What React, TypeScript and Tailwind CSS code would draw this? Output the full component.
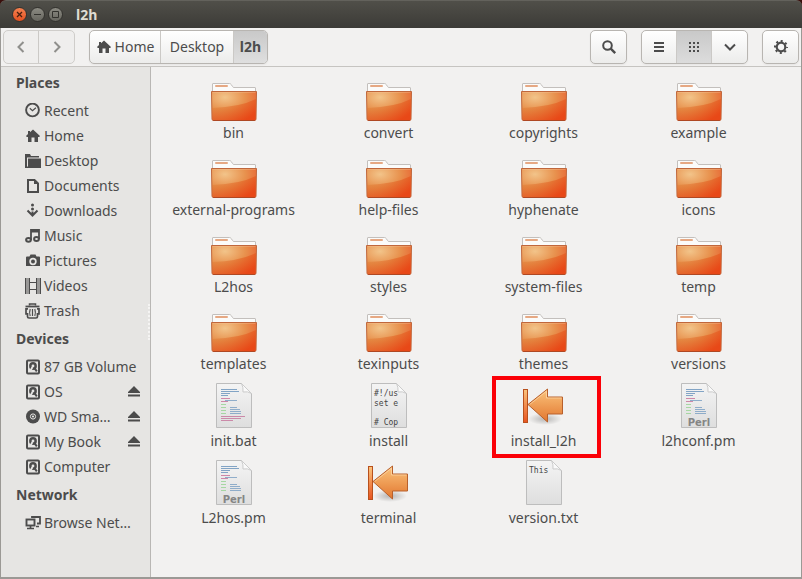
import React from 'react';
import clsx from 'clsx';

type FileKind = 'folder' | 'script' | 'shell' | 'perl' | 'text' | 'launcher';

interface FileEntry {
    name: string;
    kind: FileKind;
    marked?: boolean;
}

interface Place {
    name: string;
    icon: React.FC;
    ejectable?: boolean;
}

const FOLDERS = [
    'bin', 'convert', 'copyrights', 'example',
    'external-programs', 'help-files', 'hyphenate', 'icons',
    'L2hos', 'styles', 'system-files', 'temp',
    'templates', 'texinputs', 'themes', 'versions',
];

const FILES: FileEntry[] = [
    ...FOLDERS.map((name): FileEntry => ({ name, kind: 'folder' })),
    { name: 'init.bat', kind: 'script' },
    { name: 'install', kind: 'shell' },
    { name: 'install_l2h', kind: 'launcher', marked: true },
    { name: 'l2hconf.pm', kind: 'perl' },
    { name: 'L2hos.pm', kind: 'perl' },
    { name: 'terminal', kind: 'launcher' },
    { name: 'version.txt', kind: 'text' },
];

// Small symbolic icons, all on a 16px grid
const Symbolic: React.FC<{ children: React.ReactNode }> = ({ children }) => (
    <svg width="16" height="16" viewBox="0 0 16 16" className="shrink-0" fill="none" stroke="currentColor" strokeWidth="2" aria-hidden="true">
        {children}
    </svg>
);

const RecentIcon = () => (
    <Symbolic>
        <circle cx="7.5" cy="7" r="6.4" strokeWidth="1.9" />
        <path d="M4.8 5.3 7.5 7.7l3.4-3" strokeWidth="1.2" />
    </Symbolic>
);

const HomeIcon = () => (
    <Symbolic>
        <path d="M8 1.5 15 8l-.8.9H13V14H9.5V9.5h-3V14H3V8.9H1.8L1 8l2-1.9V3h2v1.3z" fill="currentColor" stroke="none" />
    </Symbolic>
);

const DesktopIcon = () => (
    <Symbolic>
        <path d="M0 15V1h5l1 2h8v1.500H2V15z" fill="currentColor" stroke="none" />
        <path d="M3 5.500h13V15H1.200L3 13z" fill="currentColor" stroke="none" />
    </Symbolic>
);

const DocumentIcon = () => (
    <Symbolic>
        <path d="M3 2h6.5L13 5.5V14H3z" />
        <path d="M9 1v5h5z" fill="currentColor" stroke="none" />
    </Symbolic>
);

const DownloadIcon = () => (
    <Symbolic>
        <circle cx="7.5" cy="2" r="1.5" fill="currentColor" stroke="none" />
        <circle cx="7.5" cy="6" r="1.5" fill="currentColor" stroke="none" />
        <path d="M7.5 8.500V12M2.500 7.500l5 5 5-5" strokeWidth="2" />
    </Symbolic>
);

const MusicIcon = () => (
    <Symbolic>
        <path d="M6 12V2h8v9M6 3.500h8" strokeWidth="1.8" />
        <ellipse cx="3.5" cy="11.800" rx="2.400" ry="1.900" strokeWidth="2" />
        <ellipse cx="11.5" cy="11" rx="2.400" ry="1.900" strokeWidth="2" />
    </Symbolic>
);

const CameraIcon = () => (
    <Symbolic>
        <path fillRule="evenodd" d="M5.5 1.5h5l1 2H14q1 0 1 1V13H1V4.5q0-1 1-1h2.500zM8 4.800a3.700 3.700 0 1 0 0 7.400 3.700 3.700 0 0 0 0-7.400z" fill="currentColor" stroke="none" />
        <circle cx="8" cy="8.500" r="2" fill="currentColor" stroke="none" />
    </Symbolic>
);

const FilmIcon = () => (
    <Symbolic>
        <path d="M.5 0v16M4.500 0v16M11.500 0v16M15.500 0v16" strokeWidth="1" />
        <path d="M2.500 .5v15M13.500 .5v15" strokeWidth="3" strokeDasharray="1 1" />
        <path d="M4.500 4.500h7M4.500 11.500h7" strokeWidth="1" />
    </Symbolic>
);

const TrashIcon = () => (
    <Symbolic>
        <path d="M4.500 2.500V1h6v1.500" strokeWidth="1.500" />
        <path d="M.5 3.500h14" strokeWidth="1.800" />
        <path d="M3 5.800H1v5h1.500v2.700q0 1.500 1.500 1.500h7q1.500 0 1.500-1.500v-2.700H14v-5H12" strokeWidth="1.700" />
        <path d="M5.200 6q-1.200 3.500 0 7M9.800 6q1.200 3.500 0 7M7.500 6v7" strokeWidth="1.200" />
    </Symbolic>
);

const DriveIcon = () => (
    <Symbolic>
        <rect x="2" y="1.500" width="12" height="13" rx="1" />
        <circle cx="8" cy="7" r="3.900" fill="currentColor" stroke="none" />
        <circle cx="8" cy="7" r="1.400" fill="#e6e5e3" stroke="none" />
        <path d="M7.500 8 5 12.500" stroke="#e6e5e3" strokeWidth="1.800" />
        <path d="m9 8.500 2.800 3.800" strokeWidth="2" />
    </Symbolic>
);

const DiscIcon = () => (
    <Symbolic>
        <circle cx="8" cy="7.500" r="7" fill="currentColor" stroke="none" />
        <circle cx="8" cy="7.500" r="2.600" stroke="#e6e5e3" strokeWidth="1" />
        <circle cx="8" cy="7.500" r="1.100" fill="#e6e5e3" stroke="none" />
    </Symbolic>
);

const NetworkIcon = () => (
    <Symbolic>
        <path d="M7 3V2h8v6.5h-3" strokeWidth="1.8" />
        <rect x="1.500" y="4.500" width="8" height="6" strokeWidth="1.900" />
        <path d="M2 13.500h7M11 11.500h3M5.500 11v2" strokeWidth="1.700" />
    </Symbolic>
);

const EjectIcon = () => (
    <svg width="14" height="14" viewBox="0 0 14 14" fill="currentColor" aria-hidden="true">
        <path d="M7 1 13 7v1H1V7zM1 9.500h12v2H1z" />
    </svg>
);

const SECTIONS: { title: string; places: Place[] }[] = [
    {
        title: 'Places',
        places: [
            { name: 'Recent', icon: RecentIcon },
            { name: 'Home', icon: HomeIcon },
            { name: 'Desktop', icon: DesktopIcon },
            { name: 'Documents', icon: DocumentIcon },
            { name: 'Downloads', icon: DownloadIcon },
            { name: 'Music', icon: MusicIcon },
            { name: 'Pictures', icon: CameraIcon },
            { name: 'Videos', icon: FilmIcon },
            { name: 'Trash', icon: TrashIcon },
        ],
    },
    {
        title: 'Devices',
        places: [
            { name: '87 GB Volume', icon: DriveIcon },
            { name: 'OS', icon: DriveIcon, ejectable: true },
            { name: 'WD Sma…', icon: DiscIcon, ejectable: true },
            { name: 'My Book', icon: DriveIcon, ejectable: true },
            { name: 'Computer', icon: DriveIcon },
        ],
    },
    {
        title: 'Network',
        places: [{ name: 'Browse Net…', icon: NetworkIcon }],
    },
];

// Gradients are shared by every file icon, so they are defined once
const IconGradients = () => (
    <svg width="0" height="0" className="absolute" aria-hidden="true">
        <defs>
            <radialGradient id="folderFront" cx="0.3" cy="0.2" r="0.9">
                <stop offset="0" stopColor="#f2c48a" />
                <stop offset="0.5" stopColor="#e8924e" />
                <stop offset="1" stopColor="#e8562a" />
            </radialGradient>
            <linearGradient id="folderShade" x1="0" y1="0" x2="1" y2="0.6">
                <stop offset="0" stopColor="#dc8a3c" stopOpacity="0.35" />
                <stop offset="1" stopColor="#e8420f" stopOpacity="0.7" />
            </linearGradient>
            <linearGradient id="sheet" x1="0" y1="0" x2="0" y2="1">
                <stop offset="0" stopColor="#f4f4f4" />
                <stop offset="1" stopColor="#dedede" />
            </linearGradient>
            <linearGradient id="arrow" x1="0" y1="0" x2="0" y2="1">
                <stop offset="0" stopColor="#fbc47c" />
                <stop offset="1" stopColor="#e2762f" />
            </linearGradient>
            <linearGradient id="bar" x1="0" y1="0" x2="0" y2="1">
                <stop offset="0" stopColor="#fbc47c" />
                <stop offset="1" stopColor="#e8531f" />
            </linearGradient>
            <radialGradient id="arrowShadow">
                <stop offset="0" stopColor="#000" stopOpacity="0.25" />
                <stop offset="1" stopColor="#000" stopOpacity="0" />
            </radialGradient>
        </defs>
    </svg>
);

const FolderArt = () => (
    <>
        <path d="M2.500 18V10q0-.5.5-.5h16.500q1 0 1.700 1l1.300 2q.5 1 1.500 1H45q.5 0 .5.500V18z" fill="#fbfbfa" stroke="#c3bfbc" />
        <rect x="5" y="11" width="13" height="2" rx="1" fill="#e6a883" />
        <path d="M1.500 17.500h45L46 45q0 1.500-1.500 1.500h-41Q2 46.500 2 45z" fill="url(#folderFront)" stroke="#c0673c" />
        <path d="M2.200 34Q30 33 45.900 25L45.500 46h-43z" fill="url(#folderShade)" />
        <path d="M2.500 18.500h43" stroke="#f6c79a" strokeOpacity="0.35" />
        <path d="M3 46.500h42" stroke="#a83c18" strokeOpacity="0.7" />
    </>
);

const LauncherArt = () => (
    <>
        <ellipse cx="25" cy="37" rx="17" ry="6" fill="url(#arrowShadow)" />
        <rect x="3.500" y="7.500" width="4" height="33" fill="url(#bar)" stroke="#b8501c" />
        <path d="M8 22.500 27.500 7v8h15v17h-15v8z" fill="url(#arrow)" stroke="#b8602c" strokeLinejoin="round" />
        <path d="M9.700 22.500 26.500 9.200V16h15" stroke="#fde0b4" strokeOpacity="0.6" fill="none" />
    </>
);

const CodeLines = () => (
    <g strokeOpacity="0.85">
        <path d="M11 7.500h16M11 9.500h18M11 11.500h9M11 13.500h7" stroke="#6f96bd" />
        <path d="M11 16.500h9M11 19.500h7" stroke="#c9759c" />
        <path d="M15 18.500h12M20 25.500h7M20 27.500h10M20 29.500h11M20 31.500h11" stroke="#7fa2c4" />
        <path d="M11 22.500h5M11 25.500h5M11 28.500h5M11 31.500h5" stroke="#9bd497" />
    </g>
);

const SheetArt: React.FC<{ kind: FileKind }> = ({ kind }) => (
    <>
        <path d="M6.500 1.500h25l10 10v34h-35z" fill="url(#sheet)" stroke="#bdbdbd" />
        {kind === 'script' && (
            <>
                <CodeLines />
                <path d="M11 34.500h24M11 36.500h20M11 38.500h12" stroke="#cb8aa9" />
            </>
        )}
        {kind === 'perl' && (
            <>
                <CodeLines />
                <text x="24" y="44" textAnchor="middle" className="fill-[#858585] font-['DejaVu_Sans'] text-[10px] font-bold">Perl</text>
            </>
        )}
        {kind === 'shell' && (
            <g className="fill-[#444] font-['DejaVu_Sans_Mono'] text-[8px]">
                <text x="9" y="14">#!/us</text>
                <text x="9" y="24">set e</text>
                <text x="9" y="43"># Cop</text>
            </g>
        )}
        {kind === 'text' && (
            <text x="9" y="14" className="fill-[#444] font-['DejaVu_Sans_Mono'] text-[8px]">This</text>
        )}
        <path d="M31.500 1.500l10 10q-4-2.500-8.500-1.500 .5-4.500-1.500-8.500z" fill="#fafafa" stroke="#cbcbcb" strokeLinejoin="round" />
    </>
);

const FileIcon: React.FC<{ kind: FileKind }> = ({ kind }) => (
    <svg width="48" height="48" viewBox="0 0 48 48" aria-hidden="true">
        {kind === 'folder' && <FolderArt />}
        {kind === 'launcher' && <LauncherArt />}
        {kind !== 'folder' && kind !== 'launcher' && <SheetArt kind={kind} />}
    </svg>
);

const TitleBar = () => (
    <header className="flex h-7 items-center gap-[3px] rounded-t-md border-t border-[#63625c] bg-linear-to-b from-[#504f49] to-[#3c3b37] pl-3">
        <button aria-label="Close" className="flex size-[15px] items-center justify-center rounded-full border border-[#33322e] bg-linear-to-b from-[#f4804f] to-[#e4501f] text-[#4a2010]">
            <svg width="7" height="7" viewBox="0 0 7 7" stroke="currentColor" strokeWidth="1.3"><path d="m1 1 5 5M6 1 1 6" /></svg>
        </button>
        <button aria-label="Minimize" className="flex size-[15px] items-center justify-center rounded-full border border-[#33322e] bg-linear-to-b from-[#8b8a82] to-[#67665f] text-[#33322e]">
            <svg width="7" height="7" viewBox="0 0 7 7" stroke="currentColor"><path d="M0 3.5h7" /></svg>
        </button>
        <button aria-label="Maximize" className="flex size-[15px] items-center justify-center rounded-full border border-[#33322e] bg-linear-to-b from-[#8b8a82] to-[#67665f] text-[#33322e]">
            <svg width="7" height="7" viewBox="0 0 7 7" stroke="currentColor" fill="none"><path d="M.5.5h6v6h-6z" /></svg>
        </button>
        <h1 className="pl-[10px] text-sm font-bold text-[#dfdbd2]">l2h</h1>
    </header>
);

const ToolGroup: React.FC<{ children: React.ReactNode; flat?: boolean }> = ({ children, flat }) => (
    <div
        className={clsx(
            'flex h-[34px] divide-x divide-[#cbc9c6] overflow-hidden rounded-[5px] border',
            flat ? 'border-[#cfcdca] bg-[#efeeed]' : 'border-[#b8b5b1] bg-linear-to-b from-white to-[#ececeb] shadow-xs',
        )}
    >
        {children}
    </div>
);

const ToolButton: React.FC<{ label: string; children: React.ReactNode; active?: boolean; disabled?: boolean }> = ({ label, children, active, disabled }) => (
    <button
        aria-label={label}
        disabled={disabled}
        className={clsx(
            'flex w-[35px] items-center justify-center',
            active && 'bg-linear-to-b from-[#c9c9c9] to-[#dcdcdc]',
            disabled && 'text-[#8f8f8c]',
        )}
    >
        {children}
    </button>
);

const Toolbar = () => (
    <div className="flex h-[39px] items-center justify-between border-b border-[#c6c4c1] bg-[#f2f1f0] px-[2px]">
        <div className="flex gap-[14px]">
            <ToolGroup flat>
                <ToolButton label="Back" disabled>
                    <Symbolic><path d="M10.5 3 5.500 8l5 5" /></Symbolic>
                </ToolButton>
                <ToolButton label="Forward" disabled>
                    <Symbolic><path d="m5.500 3 5 5-5 5" /></Symbolic>
                </ToolButton>
            </ToolGroup>
            <ToolGroup>
                <button className="flex w-[71px] items-center justify-center gap-[3px]">
                    <HomeIcon />
                    Home
                </button>
                <button className="w-[73px]">Desktop</button>
                <button className="w-[33px] bg-linear-to-b from-[#c9c9c9] to-[#dfdfdf] font-bold">l2h</button>
            </ToolGroup>
        </div>
        <div className="flex gap-[14px]">
            <ToolGroup>
                <ToolButton label="Search">
                    <Symbolic>
                        <circle cx="6.5" cy="6.5" r="4.3" />
                        <path d="m9.700 9.700 4.500 4.500" strokeWidth="2.400" />
                    </Symbolic>
                </ToolButton>
            </ToolGroup>
            <ToolGroup>
                <ToolButton label="List view">
                    <Symbolic><path d="M3 4h10M3 8h10M3 12h10" /></Symbolic>
                </ToolButton>
                <ToolButton label="Icon view" active>
                    <Symbolic><path d="M3 4h10M3 8h10M3 12h10" strokeDasharray="2 2" /></Symbolic>
                </ToolButton>
                <ToolButton label="View options">
                    <Symbolic><path d="m3 5.500 5 5 5-5" /></Symbolic>
                </ToolButton>
            </ToolGroup>
            <ToolGroup>
                <ToolButton label="Settings">
                    <Symbolic>
                        <circle cx="8" cy="8" r="4.300" strokeWidth="2.200" />
                        <circle cx="8" cy="8" r="6" strokeWidth="2" strokeDasharray="2 2.712" strokeDashoffset="1" />
                    </Symbolic>
                </ToolButton>
            </ToolGroup>
        </div>
    </div>
);

const Sidebar = () => (
    <nav className="flex w-[150px] shrink-0 border-r border-[#b9b7b4] bg-[#e6e5e3]">
        <div className="min-w-0 flex-1">
            {SECTIONS.map(({ title, places }) => (
                <section key={title}>
                    <h2 className="pl-[15px] leading-[31px] font-bold">{title}</h2>
                    <ul>
                        {places.map(({ name, icon: Icon, ejectable }) => (
                            <li key={name} className="flex h-[25px] items-center justify-between pr-[7px] pl-6">
                                <a href="#" className="flex items-center gap-[3px] whitespace-nowrap">
                                    <Icon />
                                    {name}
                                </a>
                                {ejectable && (
                                    <button aria-label={`Eject ${name}`}>
                                        <EjectIcon />
                                    </button>
                                )}
                            </li>
                        ))}
                    </ul>
                </section>
            ))}
        </div>
        <div className="h-9 w-[2px] self-center border-r-2 border-dotted border-[#f5f4f3]" />
    </nav>
);

const App: React.FC = () => (
    <div className="flex min-h-screen flex-col bg-[#3a0f0c] font-['Noto_Sans','Open_Sans',sans-serif] text-sm text-[#4c4c4c]">
        <IconGradients />
        <TitleBar />
        <div className="flex flex-1 flex-col border-x border-b-2 border-[#9b9995] bg-[#f2f1f0]">
            <Toolbar />
            <div className="flex flex-1">
                <Sidebar />
                <main className="flex-1 pt-[7px] pr-1 pl-[5px]">
                    <ul className="grid grid-cols-[repeat(auto-fill,155px)] gap-y-[7px]">
                        {FILES.map(({ name, kind, marked }) => (
                            <li key={name} className="relative flex flex-col items-center">
                                <FileIcon kind={kind} />
                                <span className="leading-[22px]">{name}</span>
                                {marked && <div className="absolute -top-[6px] left-[26px] h-[82px] w-[109px] border-4 border-[#fb0007]" />}
                            </li>
                        ))}
                    </ul>
                </main>
            </div>
        </div>
    </div>
);

export default App;
